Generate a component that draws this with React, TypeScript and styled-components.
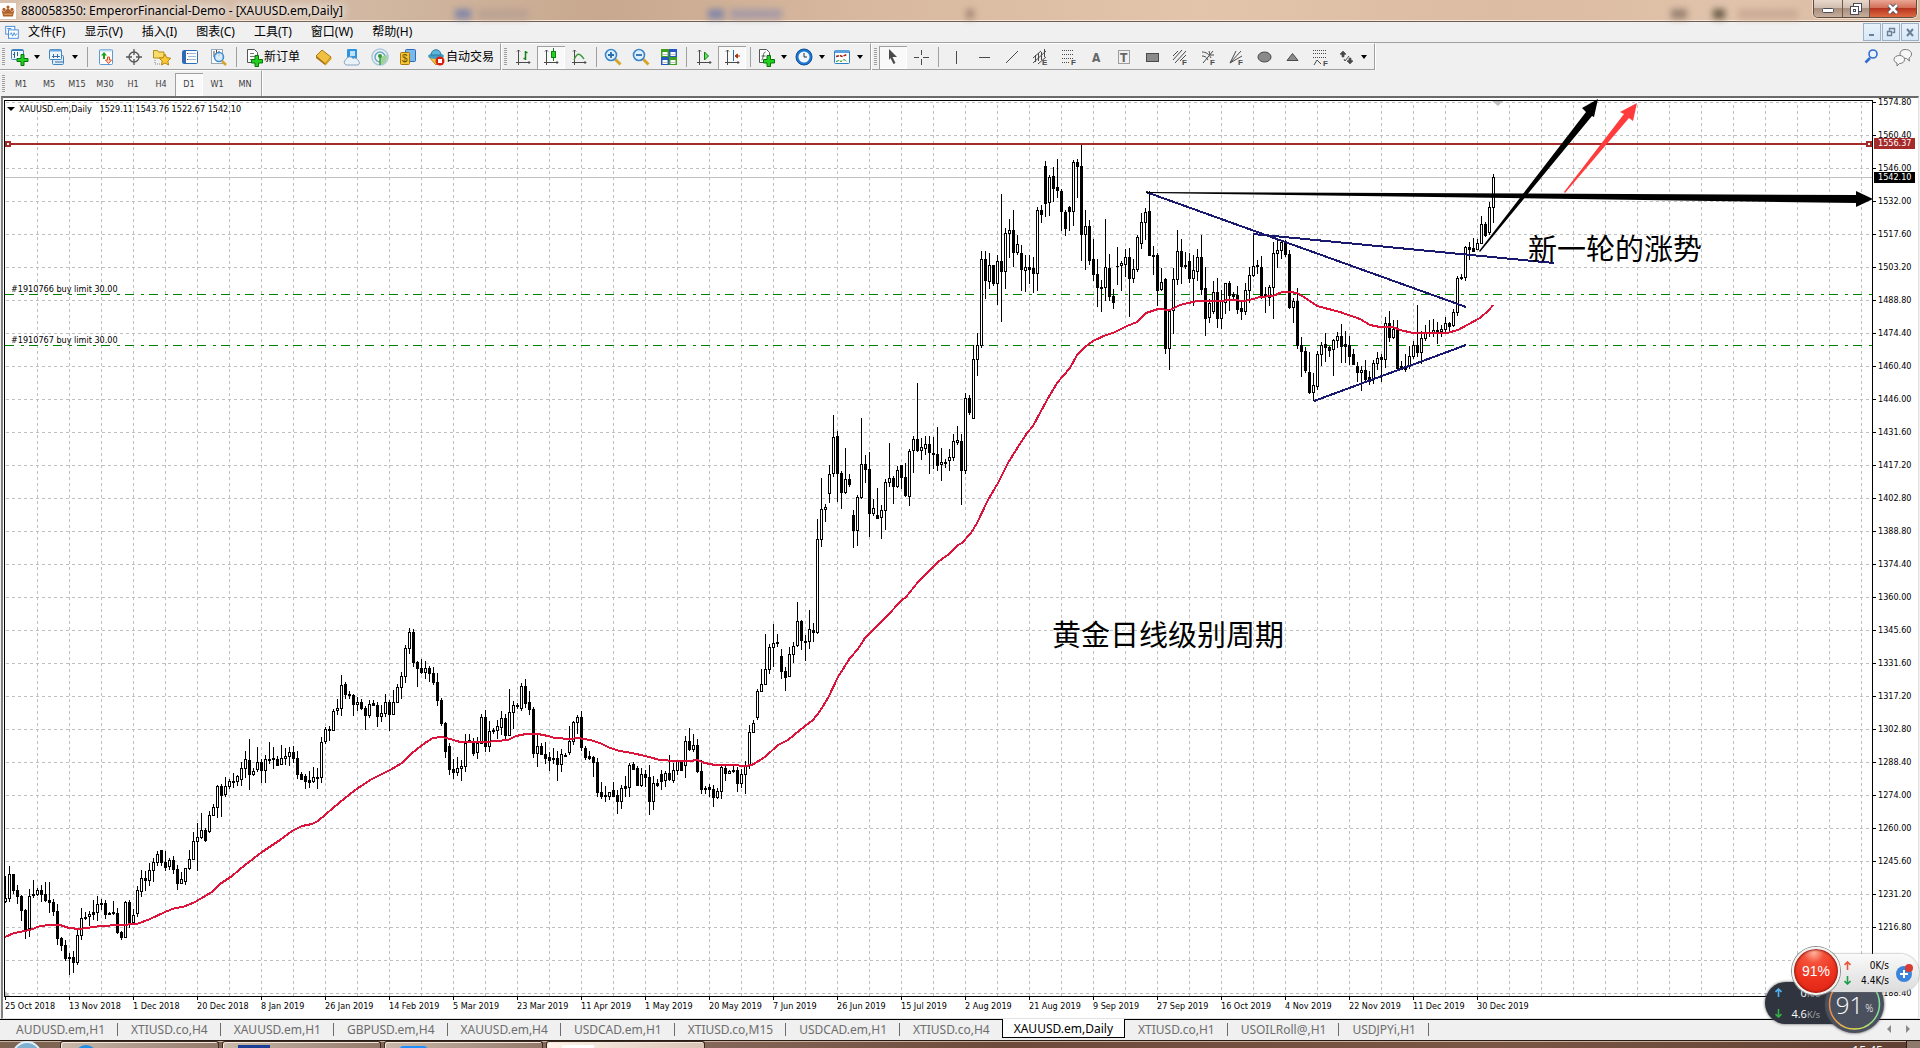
import React from 'react';
import styled, { createGlobalStyle, css } from 'styled-components';

const UI = '"Noto Sans", "Noto Sans CJK SC", sans-serif';
const SMALL = '"DejaVu Sans Condensed", "DejaVu Sans", "Noto Sans CJK SC", sans-serif';

const Global = createGlobalStyle`
  * { box-sizing: border-box; }
  body { margin: 0; background: #f0f0f0; color: #000; font-family: ${UI}; font-size: 12px; overflow: hidden; }
  button { font: inherit; color: inherit; border: 0; margin: 0; padding: 0; background: none; }
  svg { display: block; }
`;

/* ---------- quotes ---------- */

// Each bar reads: o = rising / f = falling, then high, body top, body bottom and low,
// measured downwards in thirds of a pixel from the `top` of its block.
const blocks: { top: number; bars: string }[] = [
  {
    top: 560,
    bars: `o948 1015 1025 1030,o918 943 1015 1027,f942 942 990 1002,f975 990 1010 1032,f1005 1010 1052 1085,f1047 1050 1107 1138,
o987 1009 1105 1133,f960 1003 1006 1015,o985 991 1004 1010,f975 990 1003 1027,f968 1003 1021 1027,f966 1020 1027 1060,
f1018 1026 1054 1068,f1033 1054 1135 1157,f1131 1135 1157 1175,f1140 1156 1195 1204,f1180 1192 1195 1247,f1175 1192 1208 1239,
o1110 1127 1207 1215,o1045 1075 1127 1140,f1057 1072 1075 1080,o1053 1063 1070 1098,f1020 1058 1062 1080,o1010 1033 1057 1085,
f1018 1029 1032 1050,f1022 1030 1064 1078,f1056 1059 1063 1067,f1025 1056 1060 1067,f1044 1060 1117 1122,f1113 1116 1133 1141,
o1023 1027 1132 1133,f1020 1027 1087 1106,o1048 1065 1087 1091,o978 991 1060 1073,o930 954 995 1013,f933 955 962 993,
o911 931 961 980,o895 906 932 967,o875 882 907 918,f870 871 907 920,f875 906 921 935,o895 901 919 931,
f890 901 929 942,f915 928 970 992,o938 957 970 974,o925 925 965 975,o870 897 926 930,o818 844 899 902,
o789 832 844 933,o760 811 832 837,f805 810 840 848,o753 766 815 820,o733 742 766 770,o677 679 742 776,
f672 678 705 773,o652 679 704 713,o658 664 680 687,f640 663 667 685,o645 649 665 680,o607 625 658 680,
o573 598 625 655,f537 600 643 692,o625 634 643 650,o561 607 629 638,f597 606 632 670,o586 598 630 669,
f548 597 600 613,f561 595 599 627,f590 598 617 617,o555 594 613 616,o565 589 595 615,o561 577 589 619,
f558 577 595 610,f573 595 643 658,f637 643 658 662,f642 650 663 689,f633 662 666 686,o621 652 664 669,
f624 651 654 689,o532 547 653 671,o501 508 544 554,f498 509 512 545,o448 454 511 515,o418 445 451 467,
o345 376 445 468,f367 373 404 418,f393 403 406 418,f403 405 434 470,o413 427 433 455,f417 427 445 450,
f440 445 467 510,o421 433 466 475,f420 430 436 438,f426 436 470 503,o437 460 470 487,o403 427 460 472,
f422 427 464 513,o391 427 463 465,o373 382 427 431,o337 349 383 418,o255 265 349 370,o205 217 265 282,
f208 217 308 322,f305 307 326 383,f297 325 338 342,o305 325 338 357,f318 325 341 368,f321 340 367 377,
f339 367 421 438,f415 421 491 500,f487 490 575 596,f549 558 628 647,f597 627 638 659,o591 626 637 650,
o602 619 626 663,o522 550 620 638,f523 541 547 551,f535 549 579 588,o531 549 577 597,o463 472 549 551,
f451 472 560 577,o483 514 560 576,f505 512 515 523,o480 499 512 539,o453 475 502 525,f463 474 525 537,
o387 457 527 530,o423 436 458 507,f430 435 440 447,o369 379 446 453,f357 378 429 444,f393 427 449 467,
f441 447 581 594,o523 559 581 621,f551 558 584 585,f548 583 594 612,f577 592 600 633,f565 595 599 612,
f573 595 614 663,o567 583 614 638,f580 585 588 591,o500 544 577 587,o483 487 545 555,o465 472 488 523,
f453 471 563 575,f558 564 591 602,f573 588 596 600,f588 592 608 651,f595 607 697 713,f667 697 708 717,
f680 706 710 728,o697 697 710 720,f667 690 708 711,f690 706 725 762,o675 685 725 747,f648 679 686 713,
o610 616 683 711,f606 614 627 630,f619 625 677 680,o624 643 676 681,f631 643 653 683,f615 651 725 765,
o649 670 725 750,f658 670 675 683,f630 643 665 690,o633 640 661 681,f585 639 659 665,o609 631 660 671,
o600 605 631 647,f600 604 630 632,o528 544 617 654,f504 544 569 573,o522 557 568 578,f537 556 634 641,
f600 634 689 702,f678 685 689 704,f673 682 688 712,f675 688 713 741,o684 694 713 718,o618 622 695 717,
f618 625 641 663,o630 634 640 642,f620 631 634 641,f622 631 671 696,o627 643 671 684,o603 620 643 702,
o495 517 617 629,o480 490 518 518,o387 394 473 482,o327 373 394 396,o222 328 373 375,o254 262 328 342,
o192 250 262 321,f222 247 251 261,f267 289 335 357,f321 334 351 393,o262 283 350 353,o246 259 283 311,
o126 184 257 262,f180 184 242 270,f225 243 248 303,o150 208 245 267,f189 211 218 246`,
  },
  {
    top: 340,
    bars: `o538 598 878 884,o414 508 598 621,o493 502 508 546,o375 402 460 491,o225 292 400 411,f273 289 401 486,
f393 400 458 507,o324 418 458 464,f403 418 434 441,f511 525 572 624,o465 472 572 618,o234 373 472 477,
f345 373 389 429,f336 388 521 591,o477 505 520 530,f444 525 536 536,o495 511 533 597,o417 427 511 570,
o309 415 427 441,f408 414 440 492,o379 391 440 444,f376 376 413 447,f369 412 467 471,o327 334 469 498,
o288 297 331 399,f129 298 332 338,o294 322 331 360,o289 313 326 345,f288 312 338 402,f291 340 344 387,
f261 343 375 393,o324 367 374 423,f357 366 369 386,o328 352 362 395,o282 304 352 364,o258 301 308 315,
f282 304 391 495,o159 175 391 402,f166 175 217 227`,
  },
  {
    top: 100,
    bars: `o736 778 955 956,o699 737 779 828,o453 478 737 746,f453 478 542 597,o459 496 544 567,f495 495 551 560,
o465 484 550 615,f282 484 513 666,o384 400 514 567,o357 391 401 474,f330 390 458 501,o405 433 458 465,
f435 459 509 573,o465 502 512 576,f467 503 507 552,f471 504 521 579,o321 331 520 573,f315 330 344 369,
f183 198 311 353,o227 232 308 348,f201 228 266 306,f177 261 272 294,f267 273 335 393,f330 336 386 408,
f318 322 335 393,o180 187 334 378,f177 187 200 294,f132 199 404 483,o330 379 404 510,f361 379 482 495,
f417 478 524 543,f477 522 563 621,f540 562 566 636,o357 502 563 603,f462 505 590 603,f567 588 608 627,
f441 498 500 555,o483 490 497 573,o447 472 493 531,f444 472 536 651,o477 507 535 549,o405 412 508 518,
o339 367 431 447,o324 337 367 420,f273 334 467 468,f438 465 470 525,f459 465 570 618,o504 546 568 574,
f534 537 746 762,o630 634 746 810,o504 538 632 702,o390 454 539 555,f417 454 500 552,f456 495 500 507,
f459 484 536 549,o465 511 535 618,o447 472 515 543,f405 471 567 585,f501 564 654 708,o597 610 653 669,
o543 577 635 642,f534 577 656 684,o570 604 656 687,o549 550 608 642,f544 549 587 633,f577 583 588 600,
f558 585 628 642,f602 626 635 660,o549 571 634 645,o501 526 571 609,o405 499 527 531,f480 495 500 522,
f468 501 589 598,f561 583 590 640,o555 562 592 618,o426 460 563 657,o417 451 461 504,o420 427 452 477,
f420 427 464 471,f450 462 623 629,o594 604 623 669,f564 603 735 747`,
  },
  {
    top: 90,
    bars: `f741 765 784 861,f772 784 842 850,f786 847 908 914,o849 886 908 933,o783 793 889 900,o758 766 794 828,
f729 763 773 816,f768 772 780 801,o748 751 778 858,o726 739 752 775,f702 739 768 820,f723 763 770 820,
f739 765 800 826,f777 793 823 825,f816 829 848 876,o828 840 848 903,f810 840 867 873,f843 862 873 885,
o810 820 867 882,o786 805 821 841,f793 802 807 876,o681 700 808 835,f663 700 742 757,o690 718 742 748,
f690 715 835 842,f815 828 838 842,f792 829 837 846,o768 799 826 838,o753 766 800 807,f645 766 787 802,
o724 745 787 822,o705 729 745 753,f692 727 730 741,o687 721 727 742,f696 721 724 762,o705 717 724 741,
o681 699 718 727,f697 700 710 725,o657 667 707 713,o558 565 667 678,f553 562 566 570,o468 472 562 573,
f457 472 478 510,f445 474 483 486,o447 460 478 481,o378 402 460 462,f397 402 437 441,o336 352 428 436,
o252 261 352 400`,
  },
];

type Bar = { rising: boolean; high: number; top: number; bottom: number; low: number };

const bars: Bar[] = blocks.flatMap(({ top, bars: text }) =>
  text.split(',').map((entry) => {
    const t = entry.trim();
    const [high, bodyTop, bodyBottom, low] = t.slice(1).split(' ').map((n) => top + Math.floor(Number(n) / 3));
    return { rising: t[0] === 'o', high, top: bodyTop, bottom: bodyBottom, low };
  }),
);

const average = `5,937 14,933 30,930 40,926 50,925 60,925 69,928 80,929 100,926 120,925 137,924 150,919 165,912 175,908 183,907
195,902 212,892 220,884 232,876 245,865 262,852 280,840 292,831 302,826 312,824 318,821 333,808 345,798 358,788 372,779
390,770 402,763 412,753 425,743 433,738 442,737 450,739 460,742 485,742 508,740 516,736 526,734 538,734 548,736 555,738
570,739 578,738 590,740 600,743 610,748 620,751 632,753 645,756 660,760 675,761 690,761 697,760 705,763 715,765 733,765
745,766 752,765 765,757 778,745 788,740 800,730 813,720 820,711 828,698 838,677 850,658 858,649 865,638 886,617 902,600
906,597 918,582 927,573 938,562 949,554 958,545 962,543 971,533 977,523 988,500 998,483 1008,463 1018,447 1027,433
1033,426 1047,400 1057,383 1070,368 1077,355 1085,347 1093,341 1106,335 1113,333 1127,326 1137,322 1146,313 1158,309
1170,310 1180,305 1197,301 1217,301 1233,300 1245,301 1253,299 1260,297 1273,296 1282,292 1290,292 1297,293 1307,299
1317,306 1340,312 1360,319 1370,325 1380,327 1393,327 1400,330 1413,333 1447,333 1458,330 1467,325 1480,318 1489,310 1493,305`;

// The second level from the bottom carries no label.
const prices = [
  '1574.80', '1560.40', '1546.00', '1532.00', '1517.60', '1503.20', '1488.80', '1474.40', '1460.40', '1446.00',
  '1431.60', '1417.20', '1402.80', '1388.80', '1374.40', '1360.00', '1345.60', '1331.60', '1317.20', '1302.80',
  '1288.40', '1274.00', '1260.00', '1245.60', '1231.20', '1216.80', '', '1188.40',
];

const dates = [
  '25 Oct 2018', '13 Nov 2018', '1 Dec 2018', '20 Dec 2018', '8 Jan 2019', '26 Jan 2019', '14 Feb 2019', '5 Mar 2019',
  '23 Mar 2019', '11 Apr 2019', '1 May 2019', '20 May 2019', '7 Jun 2019', '26 Jun 2019', '15 Jul 2019', '2 Aug 2019',
  '21 Aug 2019', '9 Sep 2019', '27 Sep 2019', '16 Oct 2019', '4 Nov 2019', '22 Nov 2019', '11 Dec 2019', '30 Dec 2019',
];

const chartTabs = [
  'AUDUSD.em,H1', 'XTIUSD.co,H4', 'XAUUSD.em,H1', 'GBPUSD.em,H4', 'XAUUSD.em,H4', 'USDCAD.em,H1', 'XTIUSD.co,M15',
  'USDCAD.em,H1', 'XTIUSD.co,H4', 'XAUUSD.em,Daily', 'XTIUSD.co,H1', 'USOILRoll@,H1', 'USDJPYi,H1',
];

/* ---------- layout ---------- */

const Page = styled.div`
  position: relative;
  display: flex;
  flex-direction: column;
  height: 100vh;
  overflow: hidden;
`;

const TitleBar = styled.header`
  position: relative;
  display: flex;
  align-items: flex-start;
  height: 22px;
  flex: none;
  border-bottom: 1px solid #6e5c50;
  box-shadow: inset 0 -1px 0 #f6e6d8;
  background: linear-gradient(90deg, #d9c0ac 0, #d2b8a2 360px, #c8a98f 600px, #d8b99f 860px, #e2c5ab 1200px, #dcbca2 1500px, #e0c3ab 1750px, #d9b9a0 100%);
`;

const TitleText = styled.h1`
  margin: 0;
  padding: 2px 6px 0 5px;
  font-size: 12px;
  line-height: 18px;
  font-weight: 400;
  flex: 1;
  text-shadow: 0 0 8px #fff, 0 0 8px #fff, 0 0 12px #fff;
`;

const AppIcon = styled.span`
  margin-top: 3px;
  width: 16px;
  height: 16px;
  background: #fff;
`;

const Ghost = styled.i<{ $x: number; $w: number; $c: string }>`
  position: absolute;
  left: ${(p) => p.$x}px;
  top: 9px;
  width: ${(p) => p.$w}px;
  height: 10px;
  background: ${(p) => p.$c};
  filter: blur(3px);
`;

const Controls = styled.div`
  display: flex;
  height: 18px;
  margin-right: 3px;
  border: 1px solid #5d4c42;
  border-top: 0;
  border-radius: 0 0 5px 5px;
  overflow: hidden;
  box-shadow: 0 0 0 1px #f0dccb;
`;

const Control = styled.button<{ $w: number; $close?: boolean }>`
  display: flex;
  align-items: center;
  justify-content: center;
  width: ${(p) => p.$w}px;
  border-left: 1px solid #6b594e;
  background: linear-gradient(#e8d8cc 0, #cfbcae 48%, #a88f7e 50%, #c7ae9b 100%);
  &:first-child { border-left: 0; }
  ${(p) => p.$close && css`background: linear-gradient(#e9a694 0, #d4705a 45%, #b93420 50%, #dd6a43 100%);`}
`;

const MenuBar = styled.nav`
  display: flex;
  align-items: center;
  height: 21px;
  flex: none;
  padding-left: 5px;
  border-bottom: 1px solid #a0a0a0;
  background: #f0f0f0;
`;

const MenuItem = styled.button`
  padding: 0 10px 0 9px;
  font-size: 12px;
  line-height: 18px;
`;

const MdiIcon = styled.span`
  width: 14px;
`;

const MdiControls = styled.div`
  display: flex;
  gap: 1px;
  margin: 0 1px 0 auto;
`;

const MdiButton = styled.button`
  display: flex;
  align-items: center;
  justify-content: center;
  width: 18px;
  height: 18px;
  border: 1px solid #9db0c8;
  background: linear-gradient(#e7f1fb, #d7e8f8);
`;

const ToolRow = styled.div<{ $h: number }>`
  display: flex;
  align-items: stretch;
  height: ${(p) => p.$h}px;
  flex: none;
  background: #f0f0f0;
`;

const ToolGroup = styled.div<{ $line?: boolean }>`
  display: flex;
  align-items: center;
  padding: 1px 2px 0 2px;
  border-top: 1px solid #fff;
  border-right: 1px solid #a0a0a0;
  box-shadow: 1px 0 0 #fff;
  margin-right: 1px;
  ${(p) => p.$line && css`border-bottom: 1px solid #a0a0a0;`}
`;

const Grip = styled.i`
  width: 3px;
  height: 18px;
  margin-right: 2px;
  background: repeating-linear-gradient(#a0a0a0 0 1px, #f0f0f0 1px 2px);
`;

const Separator = styled.i<{ $w: number }>`
  width: ${(p) => p.$w}px;
  height: 20px;
  background: linear-gradient(#a0a0a0, #a0a0a0) 50% 0 / 1px 100% no-repeat;
`;

const Tool = styled.button<{ $pressed?: boolean; $end?: number }>`
  display: flex;
  align-items: center;
  height: 23px;
  min-width: 28px;
  padding: 0 4px;
  font-size: 12px;
  line-height: 20px;
  white-space: nowrap;
  margin-right: ${(p) => p.$end ?? 0}px;
  ${(p) => p.$pressed && css`
    background: #f9f9f9;
    box-shadow: inset 1px 1px 0 #a0a0a0, inset -1px -1px 0 #fff;
  `}
`;

const DropTool = styled(Tool)`
  width: 38px;
  padding: 0 5px 0 2px;
  justify-content: space-between;
`;

const Caret = styled.i`
  border: 3px solid transparent;
  border-top: 4px solid #000;
  border-bottom: 0;
`;

const Right = styled.div`
  display: flex;
  align-items: center;
  gap: 12px;
  margin-left: auto;
  padding-right: 7px;
`;

const Frame = styled(Tool)`
  justify-content: center;
  padding: 0;
  width: 28px;
  font-family: ${SMALL};
  font-size: 9px;
  color: #404040;
`;

const Chart = styled.main`
  display: grid;
  grid-template-columns: minmax(0, 1fr) 45px;
  grid-template-rows: minmax(0, 1fr) 21px;
  flex: 1;
  min-height: 0;
  margin: 0 1px;
  border: solid;
  border-width: 2px 1px 1px 2px;
  border-color: #696969 #e3e3e3 #e3e3e3 #808080;
  background: #fff;
  font-family: ${SMALL};
  font-size: 9px;
`;

const Plot = styled.section`
  position: relative;
  margin: 2px 0 0 1px;
  border: 1px solid #000;
`;

const Drawing = styled.svg`
  position: absolute;
  left: -5px;
  top: -101px;
  width: calc(100% + 10px);
  height: calc(100% + 106px);
  overflow: visible;
`;

const Note = styled.div<{ $x: number; $y: number; $size?: number }>`
  position: absolute;
  left: ${(p) => p.$x}px;
  top: ${(p) => p.$y}px;
  font-size: ${(p) => p.$size ?? 9}px;
  font-family: ${(p) => (p.$size ? '"Noto Sans CJK SC", sans-serif' : SMALL)};
  line-height: 1;
  white-space: pre;
`;

const PriceAxis = styled.ol`
  position: relative;
  margin: 0;
  padding: 0;
  list-style: none;
`;

const Price = styled.li`
  display: flex;
  height: 33px;
  line-height: 9px;
  &::before { content: ''; width: 3px; height: 1px; margin: 4px 2px 0 0; background: #000; }
`;

const PriceTag = styled.span<{ $y: number; $c: string }>`
  position: absolute;
  left: 1px;
  top: ${(p) => p.$y}px;
  width: 41px;
  padding-left: 4px;
  line-height: 11px;
  color: #fff;
  background: ${(p) => p.$c};
`;

const DateAxis = styled.ol`
  grid-column: 1 / -1;
  display: flex;
  margin: 0;
  padding: 0 0 0 2px;
  list-style: none;
  overflow: hidden;
`;

const DateLabel = styled.li`
  flex: 0 0 64px;
  line-height: 12px;
  white-space: nowrap;
  &::before { content: ''; display: block; width: 1px; height: 3px; background: #000; }
`;

const TabStrip = styled.div`
  display: flex;
  height: 21px;
  flex: none;
  padding-left: 3px;
  border-top: 1px solid #000;
  background: #f0f0f0;
  font-family: ${UI};
`;

const Tab = styled.button<{ $active?: boolean }>`
  position: relative;
  padding: 0 13px;
  font-size: 12px;
  line-height: 18px;
  color: #6d6d6d;
  &::after { content: ''; position: absolute; right: 0; top: 3px; width: 1px; height: 13px; background: #6d6d6d; }
  ${(p) => p.$active && css`
    height: 19px;
    margin: -1px 0 0 -1px;
    padding: 1px 11px 0;
    color: #000;
    background: #fff;
    border: solid #000;
    border-width: 0 1px 1px;
    &::after { display: none; }
  `}
`;

const TabArrows = styled.div`
  display: flex;
  gap: 14px;
  margin-left: auto;
  padding: 5px 9px 0 0;
`;

const Taskbar = styled.footer`
  display: flex;
  gap: 3px;
  height: 8px;
  flex: none;
  overflow: hidden;
  border-top: 1px solid #2a1c14;
  box-shadow: inset 0 1px 0 #c9b3a0;
  background: linear-gradient(90deg, #7d6453 0, #85685a 700px, #6d4a3a 1000px, #7b5645 1500px, #5e4032 100%);
`;

const Orb = styled.button`
  width: 57px;
  padding-left: 12px;
`;

const TaskButton = styled.button<{ $active?: boolean }>`
  width: 159px;
  padding: 3px 0 0 15px;
  border: 1px solid #3a2a20;
  border-bottom: 0;
  border-radius: 3px 3px 0 0;
  background: ${(p) => (p.$active ? 'linear-gradient(90deg, #fff4ea, #d9c3b4)' : 'linear-gradient(90deg, #c9b9aa, #93796a)')};
  box-shadow: inset 1px 1px 0 #f3e8de;
`;

const Clock = styled.time`
  margin: 3px 20px 0 auto;
  font-size: 12px;
  line-height: 14px;
  color: #fff;
`;

const Desktop = styled.button`
  width: 14px;
  border-left: 1px solid #2a1c14;
  background: #8d7a6c;
`;

const DarkMeter = styled.aside`
  position: absolute;
  right: 36px;
  bottom: 15px;
  width: 119px;
  height: 58px;
  color: #fff;
  font-family: "Open Sans", sans-serif;
`;

const DarkPill = styled.div`
  position: absolute;
  left: 0;
  top: 7px;
  width: 90px;
  height: 42px;
  padding-left: 10px;
  border-radius: 21px;
  background: #2f343e;
  box-shadow: 0 0 3px #555;
`;

const Speed = styled.div`
  display: flex;
  align-items: center;
  justify-content: space-between;
  width: 45px;
  height: 21px;
  font-size: 11px;
  white-space: nowrap;
  small { font-size: 9px; color: #a9adb5; }
`;

const DarkDial = styled.div`
  position: absolute;
  right: 0;
  top: 0;
  width: 59px;
  height: 58px;
  display: flex;
  align-items: center;
  justify-content: center;
  border-radius: 50%;
  background: #4b505e;
  box-shadow: 0 0 3px #444;
  font-size: 24px;
  font-weight: 300;
  svg { position: absolute; inset: 0; }
  small { font-size: 10px; margin: 8px 0 0 2px; }
`;

const LightMeter = styled.aside`
  position: absolute;
  right: 1px;
  bottom: 52px;
  width: 127px;
  height: 49px;
`;

const LightPill = styled.div`
  position: absolute;
  right: 0;
  top: 7px;
  width: 104px;
  height: 38px;
  display: flex;
  align-items: center;
  gap: 6px;
  padding: 0 5px 0 29px;
  border-radius: 19px;
  background: linear-gradient(#fafafa, #dcdcdc);
  box-shadow: 0 0 2px #777;
`;

const Rates = styled.div`
  width: 45px;
  font-family: ${SMALL};
  font-size: 10px;
  line-height: 15px;
  div { display: flex; align-items: center; justify-content: space-between; }
`;

const RedDial = styled.div`
  position: absolute;
  left: 0;
  top: 0;
  width: 48px;
  height: 48px;
  display: flex;
  align-items: center;
  justify-content: center;
  border-radius: 50%;
  border: 2px solid #f4f4f4;
  box-shadow: 0 0 0 1px #8c8c8c, inset 0 0 2px 1px #8a1c10;
  background: radial-gradient(circle at 45% 8%, #ffb4a0 0, #f4513a 22%, #ee3320 55%, #d91f10 100%);
  color: #fff;
  font-family: "Liberation Sans", sans-serif;
  font-size: 14px;
`;

/* ---------- icons ---------- */

const G = '#4a4a4a';

const axes = 'M5.500 3v15M3 15.500h14M15.500 14l1.500 1.500-1.500 1.500M4 4.500l1.500-1.500 1.500 1.500';

const shapes: Record<string, React.ReactNode> = {
  crown: (
    <g fill="#b0622a"><circle cx="10" cy="5" r="2" /><circle cx="5" cy="8" r="2" /><circle cx="15" cy="8" r="2" /><path d="M2 9l3 2 3-3 2-2 2 2 3 3 3-2-2 8H4z" /><path d="M5 14h10" stroke="#f0c080" /></g>
  ),
  mdi: (
    <g fill="#fff" stroke="#4a8fdc" strokeWidth="1.4"><rect x="1" y="2" width="13" height="11" /><rect x="5" y="7" width="14" height="12" /><path d="M7 14l2-3 2 5 2-5 2 4 2-3M3 5h6" fill="none" /></g>
  ),
  newChart: (
    <><rect x="2.500" y="2.500" width="12" height="10" rx="1" fill="#eef6fd" stroke="#3f84c0" /><path d="M3 3.500h11" stroke="#3f84c0" /><path d="M5.500 5v6M4 7.500h1.500M8.500 5v4" stroke="#3a5f80" /><path d="M12 7.500h3v4h4v3h-4v4h-3v-4H8v-3h4z" fill="#22d022" stroke="#067306" /></>
  ),
  profiles: (
    <><rect x="5.500" y="8.500" width="11" height="9" rx="1" fill="#dcebf8" stroke="#3f84c0" /><rect x="2.500" y="2.500" width="12" height="10" rx="1" fill="#eef6fd" stroke="#3f84c0" /><path d="M3 3.500h11" stroke="#6ba6da" strokeWidth="2" /><path d="M5 9.500h8M6.500 7v4M10.500 7v4M8 15h8" stroke="#3a6f9f" fill="none" /></>
  ),
  market: (
    <><rect x="3.500" y="2.500" width="13" height="15" rx="1" fill="#fff" stroke="#5a9bd4" /><path d="M4 3.500h12" stroke="#b8d6f0" strokeWidth="2" /><path d="M8 5l3 3.500H9V12H7V8.500H5z" fill="#1fa11f" /><path d="M12.500 16.500l3-3.500h-2V10h-2v3h-2z" fill="#ffd9cc" stroke="#e34b21" /></>
  ),
  cross: (
    <g stroke="#555" fill="none" strokeWidth="1.300"><circle cx="10" cy="10" r="5" /><path d="M10 2v6M10 12v6M2 10h6M12 10h6" /></g>
  ),
  star: (
    <><path d="M1.500 3.500h4l1 1.500H12v6H1.500z" fill="#f8dd6a" stroke="#b38a14" /><path d="M3 13v4h6" stroke="#888" strokeDasharray="1 1" fill="none" /><path d="M13 7l1.800 3.700 4 .5-3 2.800.8 4-3.600-2-3.600 2 .8-4-3-2.800 4-.5z" fill="#fbc934" stroke="#b98412" /></>
  ),
  navigator: (
    <><rect x="2.500" y="3.500" width="15" height="13" rx="1" fill="#fff" stroke="#2d6cb4" /><path d="M4.500 4v12" stroke="#2d6cb4" strokeWidth="3" /><path d="M8 6.500h8M8 9.500h8M8 12.500h8" stroke="#9fb8cf" /><path d="M7 6.500h1M7 12.500h1" stroke="#c22" /></>
  ),
  tester: (
    <><rect x="3.500" y="2.500" width="11" height="14" fill="#fff" stroke="#9aa7b4" /><path d="M6 4v6M8.500 3v5M11 4v5" stroke={G} /><circle cx="11" cy="10" r="4.500" fill="#cfe6fa" fillOpacity=".8" stroke="#3e8ed0" strokeWidth="1.500" /><path d="M14 14l4 4" stroke="#d7a52c" strokeWidth="2.500" /></>
  ),
  order: (
    <><path d="M3.500 2.500h7l3 3v10h-10z" fill="#fff" stroke="#555" /><path d="M6 6.500h4M6 9.500h6M6 12.500h3" stroke="#777" /><path d="M11 8.500h3.500v4h4V16h-4v3.500H11V16H7.500v-3.500H11z" fill="#22d022" stroke="#067306" /></>
  ),
  gold: (
    <><path d="M2 9l6-6 9 7-6 7z" fill="#f0c040" stroke="#a8770f" /><path d="M2 9v2l9 7v-2z" fill="#a8700f" /><path d="M11 17l6.500-7v2l-6.500 7z" fill="#d9a023" /></>
  ),
  cloud: (
    <><rect x="5" y="2" width="10" height="10" rx="1" fill="#2f94e0" /><path d="M8 4h5v5H8z" fill="#bfe2fb" /><path d="M4 18a3 3 0 010-5.500 4 4 0 017-1 3.500 3.500 0 015 2 2.500 2.500 0 010 4.500z" fill="#eaf2f9" stroke="#87a6c0" /></>
  ),
  radio: (
    <g fill="none"><circle cx="10" cy="10" r="8" stroke="#a9c8de" strokeWidth="1.500" /><circle cx="10" cy="10" r="5" stroke="#63a9c8" strokeWidth="1.500" /><path d="M10 10v8a8 8 0 007-10z" fill="#9ed29a" /><path d="M10 10v8" stroke="#3c9e3c" strokeWidth="1.500" /><circle cx="10" cy="9" r="2" fill="#2f9b34" /></g>
  ),
  dollar: (
    <><rect x="7.500" y="2.500" width="10" height="12" rx="1" fill="#7ab8ec" stroke="#2d6cb4" /><rect x="2.500" y="5.500" width="9" height="12" rx="1" fill="#f5c633" stroke="#a8770f" /><text x="4" y="15" fontSize="10" fontFamily="Liberation Sans" fill="#6c4a00">$</text></>
  ),
  auto: (
    <><path d="M3 10l7 8 7-8z" fill="#f4c63a" stroke="#b3861b" /><ellipse cx="10" cy="9" rx="8" ry="3" fill="#3f9cc4" /><path d="M5 8c0-7 10-7 10 0z" fill="#5cb4d8" stroke="#2b7ca3" /><circle cx="14" cy="14" r="4.500" fill="#d7200f" /><rect x="12" y="12" width="4" height="4" fill="#fff" /></>
  ),
  barChart: (
    <g stroke={G} fill="none"><path d={axes} /><path d="M12.500 4v9M10.500 11.500h2M12.500 5.500h2" stroke="#138013" strokeWidth="1.500" /></g>
  ),
  candleChart: (
    <g stroke={G} fill="none"><path d={axes} /><path d="M12.500 1v13" stroke="#138013" /><rect x="10.500" y="4.500" width="4" height="6" fill="#22d022" stroke="#138013" /></g>
  ),
  lineChart: (
    <g stroke={G} fill="none"><path d={axes} /><path d="M5 13c3-7 5-8 10-1" stroke="#3a9a3a" strokeWidth="1.300" /></g>
  ),
  zoomIn: (
    <><path d="M12 12l5.500 5.500" stroke="#d7a52c" strokeWidth="3" /><circle cx="8" cy="8" r="5.500" fill="#dff0fd" stroke="#3a86cc" strokeWidth="1.600" /><path d="M5 8h6M8 5v6" stroke="#2a6cb0" strokeWidth="1.800" /></>
  ),
  zoomOut: (
    <><path d="M12 12l5.500 5.500" stroke="#d7a52c" strokeWidth="3" /><circle cx="8" cy="8" r="5.500" fill="#dff0fd" stroke="#3a86cc" strokeWidth="1.600" /><path d="M5 8h6" stroke="#2a6cb0" strokeWidth="1.800" /></>
  ),
  tile: (
    <><path d="M2 2h8v8H2zM10 10h8v8h-8z" fill="#3fa01e" /><path d="M10 2h8v8h-8zM2 10h8v8H2z" fill="#2558c4" /><path d="M3.500 5h5v4h-5zM11.500 5h5v4h-5zM3.500 13h5v4h-5zM11.500 13h5v4h-5z" fill="#fff" /><path d="M4 7.500h4M12 7.500h4M4 15.500h4M12 15.500h4" stroke="#b8c8b8" /></>
  ),
  scroll: (
    <g stroke={G} fill="none"><path d={axes} /><path d="M10.500 5v8l4-4z" fill="#5fe05f" stroke="#138013" /></g>
  ),
  shift: (
    <g stroke={G} fill="none"><path d={axes} /><path d="M11.500 3v11" stroke="#2a6cb0" /><path d="M18 9h-4M15.500 7l-2.500 2 2.500 2z" stroke="#b0300f" fill="#b0300f" /></g>
  ),
  indicator: (
    <><path d="M3.500 2.500h7l3 3v10h-10z" fill="#fff" stroke="#555" /><path d="M5.500 13c2 0 1-8 4-8M5.500 9h4" stroke="#555" fill="none" /><path d="M11 8.500h3.500v4h4V16h-4v3.500H11V16H7.500v-3.500H11z" fill="#22d022" stroke="#067306" /></>
  ),
  clock: (
    <><circle cx="10" cy="10" r="8" fill="#1c78d2" stroke="#0c4c94" /><circle cx="10" cy="10" r="5.500" fill="#f2f8fe" /><path d="M10 6v4h3" stroke="#333" fill="none" /></>
  ),
  template: (
    <><rect x="2.500" y="3.500" width="15" height="13" rx="1" fill="#fff" stroke="#2d7cc4" /><path d="M3 4.500h14" stroke="#5aa0dc" strokeWidth="3" /><path d="M4 9.500l4-1 2 1 5-2" stroke="#a02010" strokeWidth="1.500" fill="none" strokeDasharray="3 1" /><path d="M4 14.500l3-1 2 1 3-2 3 2" stroke="#158a15" fill="none" strokeDasharray="3 1" /></>
  ),
  pointer: <path d="M6 2l8 8h-4.500l3 6-2 1-3-6L6 13z" fill={G} />,
  plus: <path d="M10.500 3v5M10.500 12v6M3 10.500h5M12 10.500h6" stroke={G} />,
  vline: <path d="M10.500 4v13" stroke={G} />,
  hline: <path d="M5 10.500h11" stroke={G} />,
  trend: <path d="M4 16L16 4" stroke={G} />,
  channel: (
    <><path d="M3 11l8-7M3 16L16 4M8 17l8-7M5.500 8v7M8.500 6v8M11.500 5v8M14.500 2v8" stroke={G} fill="none" /><text x="12" y="18" fontSize="8" fontWeight="bold" fontFamily="Liberation Sans" fill={G}>E</text></>
  ),
  fibo: (
    <><path d="M4 3.500h12M4 7.500h12M4 11.500h12M4 15.500h8" stroke={G} strokeDasharray="1 1" /><text x="13" y="18" fontSize="8" fontWeight="bold" fontFamily="Liberation Sans" fill={G}>F</text></>
  ),
  letter: <text x="6" y="15" fontSize="12" fontWeight="bold" fontFamily="DejaVu Sans Condensed" fill="#666">A</text>,
  label: (
    <><rect x="4.500" y="3.500" width="11" height="13" fill="none" stroke={G} strokeDasharray="1 1" /><text x="6" y="15" fontSize="12" fontWeight="bold" fontFamily="DejaVu Sans Condensed" fill="#666">T</text></>
  ),
  rect: <rect x="4.500" y="6.500" width="12" height="8" fill="#8a8a8a" stroke={G} />,
  fan1: (
    <><path d="M3 13L12 3M5 16L16 4M3 9l5-5M10 14l6-6" stroke={G} fill="none" /><text x="12" y="18" fontSize="8" fontWeight="bold" fontFamily="Liberation Sans" fill={G}>F</text></>
  ),
  fan2: (
    <><path d="M5 16L15 4M4 5c4 0 7 2 9 6M4 9c3 0 4 1 6 4M11 4l1 4h4" stroke={G} fill="none" /><text x="12" y="18" fontSize="8" fontWeight="bold" fontFamily="Liberation Sans" fill={G}>F</text></>
  ),
  fan3: (
    <><path d="M4 16L10 4M4 16L15 4M4 16L16 9" stroke={G} fill="none" /><text x="12" y="18" fontSize="8" fontWeight="bold" fontFamily="Liberation Sans" fill={G}>F</text></>
  ),
  ellipse: <ellipse cx="10.500" cy="10" rx="6.500" ry="5" fill="#8a8a8a" stroke={G} />,
  triangle: <path d="M10.500 6.500l5.500 7H5z" fill="#8a8a8a" stroke={G} />,
  expansion: (
    <><path d="M3 3.500h13M3 6.500h13M3 10.500h13" stroke={G} strokeDasharray="1 1" /><path d="M4 18l3-5 4 4" stroke={G} fill="none" /><text x="13" y="19" fontSize="8" fontWeight="bold" fontFamily="Liberation Sans" fill={G}>F</text></>
  ),
  arrows: (
    <><path d="M7 4l3 3-2 1v2H6V8L4 7zM14 17l-3-3 2-1v-2h2v2l2 1z" fill={G} stroke={G} strokeWidth=".6" /><path d="M8 12l1 2 4-5" fill="none" stroke={G} /></>
  ),
  search: (
    <g fill="none" stroke="#2f6fd0"><circle cx="12" cy="7" r="4" strokeWidth="1.600" fill="#eaf3ff" /><path d="M9 11L4.500 15.500" strokeWidth="2.600" /></g>
  ),
  chat: (
    <g fill="#f8f8f8" stroke="#777"><path d="M12 2.500c4 0 6.500 2 6.500 4.500 0 2-1 3-2.500 4l.5 3-3-2.500c-4 0-6.500-2-6.500-4.500s2-4.500 5-4.500z" /><path d="M6.500 8.500c3 0 5 1.500 5 4s-2 4-5 4L4 19v-3c-2-.7-3-2-3-3.500 0-2.500 2.500-4 5.500-4z" /></g>
  ),
};

const Icon = ({ name, size = 20 }: { name: string; size?: number }) => (
  <svg width={size} height={size} viewBox="0 0 20 20" aria-hidden="true">{shapes[name]}</svg>
);

const Arrow = ({ up, color }: { up?: boolean; color: string }) => (
  <svg width="7" height="9" viewBox="0 0 7 9" aria-hidden="true">
    <path d={up ? 'M3.500 1v8M.5 4l3-3 3 3' : 'M3.500 0v8M.5 5l3 3 3-3'} fill="none" stroke={color} strokeWidth="1.600" />
  </svg>
);

/* ---------- chart ---------- */

const Candles = () => (
  <g shapeRendering="crispEdges">
    {bars.map((b, i) => {
      const x = 5 + i * 4;
      const height = Math.max(1, b.bottom - b.top + 1);
      return (
        <g key={i}>
          <rect x={x} y={b.high} width="1" height={Math.max(1, b.low - b.high)} />
          <rect x={x - 1} y={b.top} width="3" height={height} />
          {b.rising && height > 2 && <rect x={x} y={b.top + 1} width="1" height={height - 2} fill="#fff" />}
        </g>
      );
    })}
  </g>
);

const ChartDrawing = () => (
  <Drawing role="img" aria-label="XAUUSD.em daily candles">
    <defs>
      <clipPath id="frame"><rect x="5" y="101" width="1867" height="895" /></clipPath>
    </defs>
    <g clipPath="url(#frame)">
      <g stroke="#c0c0c0" strokeDasharray="3 3" shapeRendering="crispEdges">
        {prices.map((_, i) => <line key={i} x1="6" x2="1872" y1={102.5 + i * 33} y2={102.5 + i * 33} />)}
        {Array.from({ length: 58 }, (_, i) => <line key={i} x1={37.5 + i * 32} x2={37.5 + i * 32} y1="105" y2="996" />)}
      </g>
      <path d="M1492 101h11l-5 5zM5 991v5h5z" fill="#c0c0c0" />
      <path d="M5 177.500h1867" stroke="#c0c0c0" shapeRendering="crispEdges" />
      <path d="M5 294.500h1867M5 345.500h1867" stroke="#008000" strokeDasharray="9 7 3 5" shapeRendering="crispEdges" />
      <Candles />
      <path d="M5 144h1867" stroke="#a52a2a" strokeWidth="2" shapeRendering="crispEdges" />
      <polyline points={average} fill="none" stroke="#dc143c" strokeWidth="2" shapeRendering="crispEdges" />
      <path d="M1146 192L1466 307M1253 234L1554 263M1314 401L1466 345" fill="none" stroke="#191970" strokeWidth="2" shapeRendering="crispEdges" />
    </g>
    <path d="M1146 192L1856 195V191L1873 199L1856 207V203L1146 193z" />
    <path d="M1479 251L1586 112L1582 108L1598 99L1594 117L1592 116L1480 252z" />
    <path d="M1564 192L1624 114L1620 112L1637 103L1633 121L1629 118L1565 193z" fill="#ff3b3b" />
    <g fill="#fff" stroke="#a52a2a" strokeWidth="2">
      <rect x="6" y="142" width="4" height="4" /><rect x="1867" y="142" width="4" height="4" />
    </g>
    <path d="M7 107h8l-4 4z" />
  </Drawing>
);

/* ---------- page ---------- */

const IconTool = ({ name, label, pressed }: { name: string; label: string; pressed?: boolean }) => (
  <Tool $pressed={pressed} aria-label={label} aria-pressed={pressed}><Icon name={name} /></Tool>
);

const IconDrop = ({ name, label }: { name: string; label: string }) => (
  <DropTool aria-label={label}><Icon name={name} /><Caret /></DropTool>
);

const drawTools = [
  'vline', 'hline', 'trend', 'channel', 'fibo', 'letter', 'label', 'rect', 'fan1', 'fan2', 'fan3', 'ellipse', 'triangle', 'expansion',
];

export default function App() {
  return (
    <Page>
      <Global />
      <TitleBar>
        <Ghost $x={455} $w={16} $c="#8488a8" /><Ghost $x={478} $w={50} $c="#bba293" />
        <Ghost $x={708} $w={16} $c="#8488a8" /><Ghost $x={730} $w={52} $c="#a99ba6" /><Ghost $x={966} $w={8} $c="#a58a78" />
        <Ghost $x={1671} $w={16} $c="#9b8474" /><Ghost $x={1713} $w={12} $c="#6e604b" /><Ghost $x={1738} $w={60} $c="#cbab95" />
        <AppIcon><Icon name="crown" size={16} /></AppIcon>
        <TitleText>880058350: EmperorFinancial-Demo - [XAUUSD.em,Daily]</TitleText>
        <Controls>
          <Control $w={28} aria-label="最小化"><svg width="14" height="14"><rect x="1.500" y="6.500" width="11" height="4" rx="1" fill="#fff" stroke="#4b4b5a" /></svg></Control>
          <Control $w={27} aria-label="还原"><svg width="14" height="14" fill="#fff" stroke="#4b4b5a"><rect x="4.500" y="1.500" width="8" height="8" /><rect x="1.500" y="4.500" width="8" height="8" /><rect x="4.500" y="7.500" width="2" height="2" /></svg></Control>
          <Control $w={47} $close aria-label="关闭"><svg width="14" height="14"><path d="M3 3l8 8M11 3l-8 8" stroke="#4b4b5a" strokeWidth="4.500" /><path d="M3 3l8 8M11 3l-8 8" stroke="#fff" strokeWidth="2.500" /></svg></Control>
        </Controls>
      </TitleBar>

      <MenuBar>
        <MdiIcon><Icon name="mdi" size={14} /></MdiIcon>
        {['文件(F)', '显示(V)', '插入(I)', '图表(C)', '工具(T)', '窗口(W)', '帮助(H)'].map((m) => <MenuItem key={m}>{m}</MenuItem>)}
        <MdiControls>
          <MdiButton aria-label="最小化图表"><svg width="10" height="10"><path d="M2 8h5" stroke="#6b7f96" strokeWidth="2" /></svg></MdiButton>
          <MdiButton aria-label="还原图表"><svg width="10" height="10" fill="none" stroke="#6b7f96" strokeWidth="1.400"><path d="M3.500 3.500v-2h5v4h-2M1.500 4.500h4v4h-4z" /></svg></MdiButton>
          <MdiButton aria-label="关闭图表"><svg width="10" height="10"><path d="M2 2l6 7M8 2L2 9" stroke="#6b7f96" strokeWidth="2" /></svg></MdiButton>
        </MdiControls>
      </MenuBar>

      <ToolRow $h={27}>
        <ToolGroup $line>
          <Grip />
          <IconDrop name="newChart" label="新图表" /><IconDrop name="profiles" label="配置文件" />
          <Separator $w={9} />
          <IconTool name="market" label="市场报价" /><IconTool name="cross" label="数据窗口" /><IconTool name="star" label="导航" />
          <IconTool name="navigator" label="终端" /><IconTool name="tester" label="策略测试" />
          <Separator $w={8} />
          <Tool $end={6}><Icon name="order" />新订单</Tool>
          <IconTool name="gold" label="MetaEditor" /><IconTool name="cloud" label="虚拟主机" /><IconTool name="radio" label="信号" /><IconTool name="dollar" label="市场" />
          <Tool><Icon name="auto" />自动交易</Tool>
        </ToolGroup>
        <ToolGroup $line>
          <Grip />
          <IconTool name="barChart" label="柱状图" /><IconTool name="candleChart" label="阴阳烛" pressed /><IconTool name="lineChart" label="折线图" />
          <Separator $w={6} />
          <IconTool name="zoomIn" label="放大" /><IconTool name="zoomOut" label="缩小" /><IconTool name="tile" label="平铺窗口" />
          <Separator $w={7} />
          <IconTool name="scroll" label="自动滚动" /><IconTool name="shift" label="图表平移" pressed />
          <Separator $w={8} />
          <IconDrop name="indicator" label="技术指标" /><IconDrop name="clock" label="周期" /><IconDrop name="template" label="模板" />
        </ToolGroup>
        <ToolGroup $line>
          <Grip />
          <IconTool name="pointer" label="光标" pressed /><IconTool name="plus" label="十字准线" />
          <Separator $w={7} />
          {drawTools.map((t) => <IconTool key={t} name={t} label={t} />)}
          <IconDrop name="arrows" label="箭头" />
        </ToolGroup>
        <Right><Icon name="search" /><Icon name="chat" /></Right>
      </ToolRow>

      <ToolRow $h={26}>
        <ToolGroup>
          <Grip />
          {['M1', 'M5', 'M15', 'M30', 'H1', 'H4', 'D1', 'W1', 'MN'].map((f) => <Frame key={f} $pressed={f === 'D1'}>{f}</Frame>)}
        </ToolGroup>
      </ToolRow>

      <Chart>
        <Plot>
          <ChartDrawing />
          <Note $x={14} $y={4}>XAUUSD.em,Daily   1529.11 1543.76 1522.67 1542.10</Note>
          <Note $x={6} $y={184}>#1910766 buy limit 30.00</Note>
          <Note $x={6} $y={235}>#1910767 buy limit 30.00</Note>
          <Note $x={1523} $y={132} $size={29}>新一轮的涨势</Note>
          <Note $x={1047} $y={518} $size={29}>黄金日线级别周期</Note>
        </Plot>
        <PriceAxis>
          {prices.map((p, i) => <Price key={i}>{p}</Price>)}
          <PriceTag $y={40} $c="#a52a2a">1556.37</PriceTag>
          <PriceTag $y={74} $c="#000">1542.10</PriceTag>
        </PriceAxis>
        <DateAxis>
          {dates.map((d) => <DateLabel key={d}>{d}</DateLabel>)}
        </DateAxis>
      </Chart>

      <TabStrip role="tablist">
        {chartTabs.map((t, i) => <Tab key={i} role="tab" aria-selected={i === 9} $active={i === 9}>{t}</Tab>)}
        <TabArrows>
          <svg width="5" height="8"><path d="M4 0v8L0 4z" fill="#8a8a8a" /></svg>
          <svg width="5" height="8"><path d="M0 0v8l4-4z" fill="#8a8a8a" /></svg>
        </TabArrows>
      </TabStrip>

      <Taskbar>
        <Orb aria-label="开始"><svg width="30" height="8"><circle cx="15" cy="15" r="14" fill="#7fb0d0" stroke="#e0f0fa" strokeWidth="2" /></svg></Orb>
        <TaskButton aria-label="浏览器"><svg width="24" height="6"><circle cx="10" cy="11" r="11" fill="#1e90e8" /></svg></TaskButton>
        <TaskButton aria-label="应用"><svg width="32" height="6"><rect width="32" height="6" fill="#1c3f96" /></svg></TaskButton>
        <TaskButton aria-label="文档"><svg width="28" height="6"><rect y="1" width="27" height="8" rx="3" fill="#1e90ff" /></svg></TaskButton>
        <TaskButton $active aria-label="交易终端"><svg width="32" height="6"><rect width="32" height="6" fill="#fff" /></svg></TaskButton>
        <Clock>15:45</Clock>
        <Desktop aria-label="显示桌面" />
      </Taskbar>

      <DarkMeter>
        <DarkPill>
          <Speed><Arrow up color="#4fb4f0" /><span>0<small>K/s</small></span></Speed>
          <Speed><Arrow color="#35b048" /><span>4.6<small>K/s</small></span></Speed>
        </DarkPill>
        <DarkDial>
          <svg width="59" height="58">
            <defs><linearGradient id="ring" x1="0" y1="0" x2="1" y2="0"><stop offset="0" stopColor="#f08a4a" /><stop offset=".5" stopColor="#e8e04a" /><stop offset="1" stopColor="#7ee0a0" /></linearGradient></defs>
            <circle cx="29.500" cy="29" r="25" fill="none" stroke="url(#ring)" strokeWidth="1.500" />
          </svg>
          91<small>%</small>
        </DarkDial>
      </DarkMeter>
      <LightMeter>
        <LightPill>
          <Rates>
            <div><Arrow up color="#e8573a" /><span>0K/s</span></div>
            <div><Arrow color="#1f9d4d" /><span>4.4K/s</span></div>
          </Rates>
          <svg width="18" height="19"><circle cx="9" cy="10" r="8" fill="#3a84dc" /><path d="M5 10h8M9 6v8" stroke="#fff" strokeWidth="2" /><circle cx="14" cy="4" r="4" fill="#d93a32" /></svg>
        </LightPill>
        <RedDial>91%</RedDial>
      </LightMeter>
    </Page>
  );
}
